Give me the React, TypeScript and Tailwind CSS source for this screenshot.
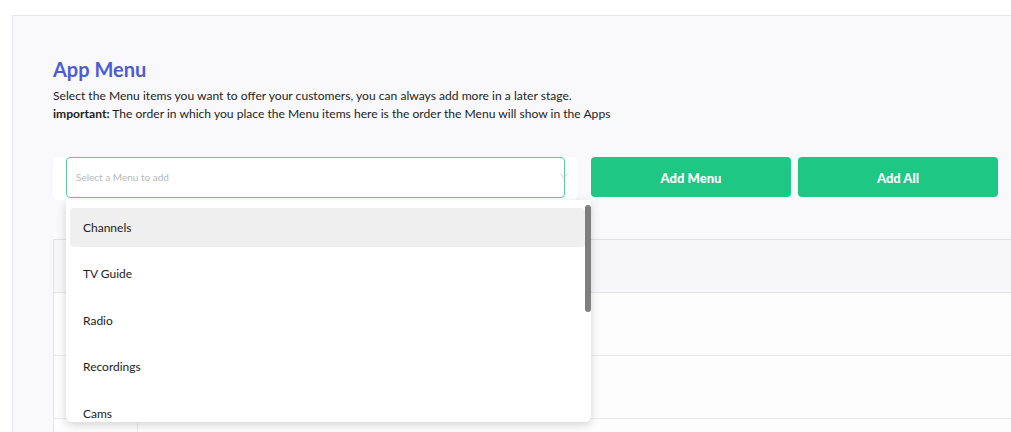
import React from "react";

const items = ["Channels", "TV Guide", "Radio", "Recordings", "Cams"];

export default function App() {
  return (
    <div
      className="h-[432px] w-[1011px] overflow-hidden bg-white pl-[12px] pt-[15px]"
      style={{ fontFamily: "Lato, 'Open Sans', sans-serif" }}
    >
      <div className="w-[1100px] h-[600px] border border-[#e6e6ea] bg-[#f9f9fb] pl-[40px] pt-[39px]">
        <h2 className="text-[20px] leading-[28px] font-bold text-[#4b5bd6]">App Menu</h2>
        <p className="text-[12.1px] leading-[18px] text-[#222] mt-[4px]">
          Select the Menu items you want to offer your customers, you can always add more in a later stage.
          <br />
          <span className="font-bold">important:</span> The order in which you place the Menu items here is the order the Menu will show in the Apps
        </p>

        <div className="mt-[34px] flex items-start">
          <div className="relative w-[525px] h-[43px] bg-white rounded-md px-[13px]">
            <div className="relative h-[41px] border border-[#5ecb9e] rounded-[4px] flex items-center pl-[9px]">
              <span className="text-[10px] text-[#b8b8b8]">Select a Menu to add</span>
              <svg
                className="absolute right-[-4px] top-[15px]"
                width="8"
                height="6"
                viewBox="0 0 8 6"
                fill="none"
              >
                <path d="M0.5 0.8 L4 5 L7.5 0.8" stroke="#c4c4c4" strokeWidth="0.9" />
              </svg>
            </div>

            <div className="absolute left-[13px] top-[43px] z-10 w-[525px] h-[222px] bg-white rounded-b-md shadow-[0_3px_10px_rgba(0,0,0,0.16)] overflow-hidden">
              <div className="flex flex-col gap-[7.5px] pt-[8px] pl-[4px] pr-[6px]">
                {items.map((it, i) => (
                  <div
                    key={it}
                    className={
                      "h-[39px] shrink-0 flex items-center pl-[13px] text-[12px] text-[#222] rounded-sm " +
                      (i === 0 ? "bg-[#efefef]" : "")
                    }
                  >
                    {it}
                  </div>
                ))}
              </div>
              <div className="absolute right-0 top-[5px] w-[6px] h-[107px] rounded-full bg-[#7f7f7f]" />
            </div>
          </div>

          <button className="ml-[13px] w-[200px] h-[40px] pt-[3px] rounded-[4px] bg-[#1ec784] text-white text-[13px] font-black">
            Add Menu
          </button>
          <button className="ml-[7px] w-[200px] h-[40px] pt-[3px] rounded-[4px] bg-[#1ec784] text-white text-[13px] font-black">
            Add All
          </button>
        </div>

        <div className="mt-[39px] border-l border-t border-[#e3e3e6]">
          <div className="h-[53px] bg-[#f7f7f9] border-b border-[#e3e3e6]" />
          <div className="h-[63px] bg-[#fdfdfd] border-b border-[#e9e9ec]" />
          <div className="h-[63px] bg-[#fdfdfd] border-b border-[#e9e9ec]" />
          <div className="h-[63px] bg-[#fdfdfd] flex">
            <div className="w-[84px] border-r border-[#e9e9ec]" />
          </div>
        </div>
      </div>
    </div>
  );
}
